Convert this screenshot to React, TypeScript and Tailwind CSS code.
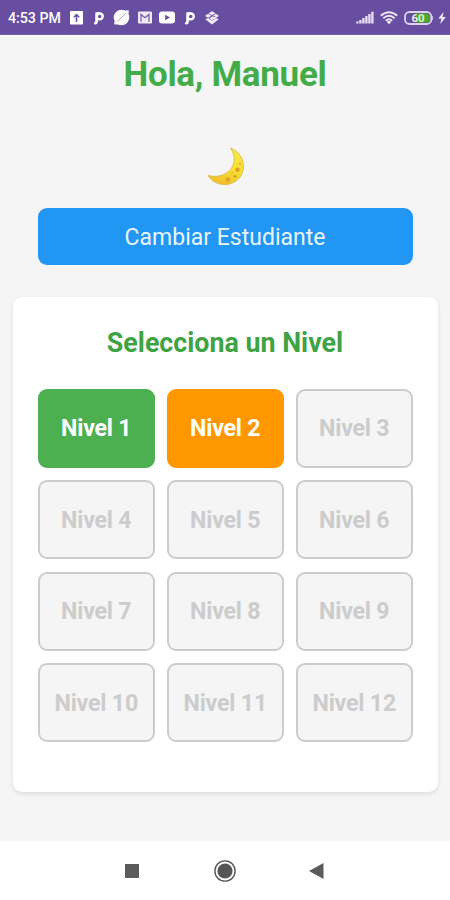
import type { ReactNode } from 'react';
import { clsx } from 'clsx';

const levels = Array.from({ length: 12 }, (_, i) => i + 1);

const PandoraIcon = () => (
  <svg width="11" height="14" viewBox="0 0 11 14" fill="none">
    <path d="M3.9 9V5.4A2.9 2.9 0 1 1 6.6 8.3H5.2" stroke="#fff" strokeWidth="2.5" strokeLinejoin="round" />
    <path d="M2.3 1.6Q4 .7 6.6 1V3.2H4.9V10.5Q4.8 13.4 2.4 13.4Q.8 13.4 .8 11.9Q2.3 11.4 2.3 9.8Z" fill="#fff" />
  </svg>
);

const StatusBar = () => (
  <header className="flex h-[34.5px] w-full shrink-0 items-center border-b border-[#7860aa] bg-[#674ea1] pt-0.5 pl-2 text-white">
    <span className="w-[62px] whitespace-nowrap text-[14.2px] leading-none font-medium">4:53 PM</span>
    <svg width="13" height="14" viewBox="0 0 13 14">
      <rect width="13" height="13.6" rx="1" fill="#fff" />
      <path d="M6.5 11V4M3.8 6.3L6.5 3.5L9.2 6.3" stroke="#674ea1" strokeWidth="1.5" fill="none" />
    </svg>
    <div className="ml-2.5 flex"><PandoraIcon /></div>
    <svg className="ml-[9px]" width="17" height="17" viewBox="0 0 17 17">
      <circle cx="8.5" cy="8.5" r="7.8" fill="#fff" />
      <path d="M12 1.5L15.8 1.3L15.6 5M5 15.6L1.3 15.6L1.4 12" fill="#fff" />
      <path d="M4.4 12.6L13.2 3.8" stroke="#a294c5" strokeWidth=".9" />
    </svg>
    <svg className="ml-2" width="14" height="13" viewBox="0 0 14 13">
      <rect width="14" height="12" y=".5" rx="1.2" fill="#f1e9f8" />
      <path d="M3 10.7V3.4L7 6.7L11 3.4V10.7" stroke="#7a60a8" strokeWidth="1.3" fill="none" />
    </svg>
    <svg className="ml-[7px]" width="16" height="13" viewBox="0 0 16 13">
      <rect width="16" height="12" y=".5" rx="3" fill="#fff" />
      <path d="M6.2 3.7L11 6.5L6.2 9.3Z" fill="#674ea1" />
    </svg>
    <div className="ml-[9px] flex"><PandoraIcon /></div>
    <svg className="ml-2.5" width="14" height="14" viewBox="0 0 14 14" fill="#f1eafa">
      <path d="M7 .3L10.5 2.2L7 4.3L3.5 2.2ZM3 2.8L6.4 4.8L3.2 6.8L0 4.9ZM11 2.8L14 4.9L7 9.2L4.2 7.4L7.8 5.3L9.3 6.1L10.5 5.3L8 4.6Z" />
      <path d="M.3 8.3L3 6.9L7 9.8L11 6.9L13.7 8.3L7 13.4Z" />
    </svg>
    <svg className="ml-auto" width="18" height="13" viewBox="0 0 18 13" fill="#e9ddf3">
      <path d="M.2 10.5H2.6V12.5H.2ZM3.2 9H5.6V12.5H3.2ZM6.2 7H8.6V12.5H6.2ZM9.2 5H11.6V12.5H9.2ZM12.2 3H14.6V12.5H12.2ZM15.2 .7H17.6V12.5H15.2Z" />
    </svg>
    <svg className="ml-1.5" width="18" height="14" viewBox="0 0 18 14" fill="none" stroke="#eee4f6" strokeWidth="1.9">
      <path d="M.8 4.7Q9-2.3 17.2 4.7M3.3 7.2Q9 2.2 14.7 7.2M5.8 9.7Q9 6.9 12.2 9.7" />
      <path d="M6.7 10.7Q9 8.9 11.3 10.7L9 13.4Z" fill="#eee4f6" stroke="none" />
    </svg>
    <svg className="ml-[6px]" width="29" height="14" viewBox="0 0 29 14">
      <path d="M12 2.4H22Q26 2.4 26 7T22 11.6H12Z" fill="#4aac29" />
      <rect x="1" y="1" width="26.3" height="12" rx="4.5" fill="none" stroke="#dfd0ef" strokeWidth="1.8" />
      <path d="M28.3 5V9" stroke="#dfd0ef" />
      <text x="14" y="11" textAnchor="middle" fontSize="11.5" fontWeight="700" fill="#e0efdd" fontFamily="Roboto, sans-serif">60</text>
    </svg>
    <svg className="mr-1 ml-[5px]" width="8" height="12" viewBox="0 0 8 12">
      <path d="M5.6 0L.2 6.6H3.4L2.3 12L7.8 5H4.5Z" fill="#f4edf9" />
    </svg>
  </header>
);

const Moon = () => (
  <svg className="mt-[51.5px] ml-[2px]" width="38" height="39" viewBox="0 0 38 39">
    <defs>
      <linearGradient id="moon" x1=".7" y1="0" x2=".4" y2="1">
        <stop stopColor="#f8e744" />
        <stop offset=".55" stopColor="#f8df32" />
        <stop offset="1" stopColor="#f0bd2e" />
      </linearGradient>
    </defs>
    <path d="M23.5 1C34.5 5.4 39 16.5 35.2 26C30.2 39.5 9.5 42.3 1.2 28.6C12.5 31.3 23 26.8 26.4 17.2C28.2 11.5 26.6 5.5 23.5 1Z" fill="url(#moon)" stroke="#d4b83e" strokeWidth=".8" />
    <g fill="#df9e20">
      <circle cx="30.5" cy="22.7" r="2.2" />
      <circle cx="20.8" cy="32.4" r="2.1" />
      <circle cx="28" cy="29.3" r="1.5" />
      <circle cx="33" cy="16.7" r="1.2" opacity=".65" />
      <circle cx="25" cy="25.7" r="1" opacity=".55" />
    </g>
  </svg>
);

const LevelTile = ({ level, children }: { level: number; children: ReactNode }) => (
  <button
    disabled={level > 2}
    className={clsx(
      'flex items-center justify-center rounded-[9px] border-2 pt-px text-[23.2px] leading-none font-bold tracking-[-0.2px] whitespace-nowrap',
      level === 1 && 'border-[#4caf50] bg-[#4caf50] text-white',
      level === 2 && 'border-[#ff9800] bg-[#ff9800] text-white',
      level > 2 && 'border-[#cccccc] bg-[#f5f5f5] text-[#cccccc]',
    )}
  >
    {children}
  </button>
);

const NavigationBar = () => (
  <nav className="flex h-[59px] w-full shrink-0 items-center bg-white pl-[125px]">
    <svg width="14" height="14"><rect width="14" height="14" fill="#5b5b5b" /></svg>
    <svg className="ml-[75px]" width="22" height="22" viewBox="0 0 22 22">
      <circle cx="11" cy="11" r="10.1" fill="none" stroke="#555" strokeWidth="1.4" />
      <circle cx="11" cy="11" r="7.6" fill="#555" />
    </svg>
    <svg className="ml-[73px]" width="15" height="16" viewBox="0 0 15 16">
      <path d="M14.5 0V16L0 8Z" fill="#5b5b5b" />
    </svg>
  </nav>
);

export default function App() {
  return (
    <div className="flex h-[900px] w-[450px] flex-col overflow-hidden bg-[#f5f5f5] font-[Roboto,sans-serif]">
      <StatusBar />
      <main className="flex grow flex-col items-center px-[12.5px]">
        <h1 className="mt-[19px] text-[35px] leading-[42px] font-bold tracking-[-0.3px] whitespace-nowrap text-[#43ac49]">Hola, Manuel</h1>
        <Moon />
        <button className="mt-[22px] h-[57px] w-[375px] rounded-[9px] bg-[#2196f3] pt-1 text-[23px] text-[#e9f5ff]">
          Cambiar Estudiante
        </button>
        <section className="mt-8 h-[495px] w-full rounded-[9px] bg-white px-[25.5px] pt-[30px] shadow-[0_2px_4px_rgba(0,0,0,0.1)]">
          <h2 className="text-center text-[26.8px] leading-8 font-bold whitespace-nowrap text-[#3fa345]">Selecciona un Nivel</h2>
          <div className="mt-[30px] -mr-[0.5px] grid h-[353px] grid-cols-3 grid-rows-4 gap-x-[12.5px] gap-y-[12.7px]">
            {levels.map((level) => (
              <LevelTile key={level} level={level}>Nivel {level}</LevelTile>
            ))}
          </div>
        </section>
      </main>
      <NavigationBar />
    </div>
  );
}
